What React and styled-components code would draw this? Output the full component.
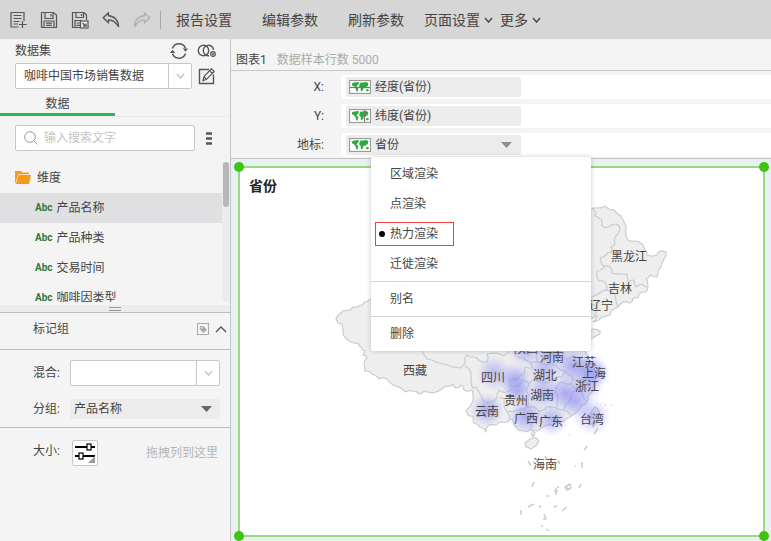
import React from "react";
import styled, { createGlobalStyle } from "styled-components";

const GlobalStyle = createGlobalStyle`
  * { box-sizing: border-box; }
  body { margin: 0; background: #f4f4f4; }
  body, button, input, select {
    font-family: Roboto, "Noto Sans CJK SC", sans-serif;
    font-size: 12px;
    line-height: 16px;
    color: #444;
  }
  button { border: 0; background: none; padding: 0; cursor: pointer; }
  svg { display: block; flex: none; }
`;

const Page = styled.div`
  min-height: 100vh;
  display: flex;
  flex-direction: column;
`;

/* ---------- toolbar ---------- */
const Toolbar = styled.header`
  height: 39px;
  display: flex;
  align-items: center;
  padding-left: 9px;
  background: #d6d6d6;
  white-space: nowrap;
`;
const IconGroup = styled.div`
  display: flex;
  gap: 13px;
  padding-right: 9px;
  border-right: 1px solid #a6a6a6;
`;
const IconButton = styled.button`
  display: flex;
  color: ${(p) => p.$color || "#555"};
`;
const TextGroup = styled.nav`
  display: flex;
  gap: 30px;
  margin-left: 15px;
`;
const MenuGroup = styled(TextGroup)`
  gap: 7px;
  margin-left: 20px;
`;
const TextButton = styled.button`
  display: flex;
  align-items: center;
  gap: 4px;
  font-size: 14px;
  line-height: 20px;
`;

/* ---------- sidebar ---------- */
const Body = styled.div`
  flex: 1;
  display: flex;
`;
const Sidebar = styled.aside`
  flex: none;
  width: 231px;
  border-right: 1px solid #c4c4c4;
  background: #f4f4f4;
`;
const DatasetPanel = styled.section`
  display: grid;
  grid-template-columns: 177px 1fr;
  grid-template-rows: 24px 26px;
  align-items: center;
  column-gap: 6px;
  padding: 0 15px 6px;
`;
const DatasetHeader = styled.div`
  grid-column: 1 / 3;
  display: flex;
  align-items: center;
  justify-content: space-between;
`;
const DatasetTools = styled.div`
  display: flex;
  gap: 9px;
`;
const SelectBox = styled.div`
  display: grid;
  grid-template-columns: 1fr 23px;
  height: 26px;
  border: 1px solid #c8c8c8;
  border-radius: 2px;
  background: #fff;
  overflow: hidden;
`;
const SelectInput = styled.select`
  grid-area: 1 / 1 / 2 / 3;
  width: 100%;
  appearance: none;
  border: 0;
  background: transparent;
  padding: 0 28px 0 8px;
`;
const SelectArrow = styled.span`
  grid-area: 1 / 2;
  display: grid;
  place-items: center;
  border-left: 1px solid #c8c8c8;
  color: #c4c4c4;
  pointer-events: none;
`;
const TabList = styled.div`
  display: flex;
  border-bottom: 1px solid #ebebeb;
`;
const Tab = styled.button`
  width: 115px;
  height: 21px;
  border-bottom: 3px solid #2ab75a;
  line-height: 18px;
`;
const SearchRow = styled.div`
  display: flex;
  align-items: center;
  gap: 11px;
  padding: 8px 15px 11px;
`;
const SearchField = styled.label`
  width: 180px;
  height: 26px;
  display: flex;
  align-items: center;
  gap: 6px;
  padding: 0 8px;
  border: 1px solid #c8c8c8;
  border-radius: 2px;
  background: #fff;
  color: #999;
`;
const SearchInput = styled.input`
  flex: 1;
  min-width: 0;
  border: 0;
  padding: 0;
  background: transparent;
  outline: 0;
  &::placeholder { color: #c4c4c4; }
`;
const FieldArea = styled.div`
  display: flex;
  height: 143px;
  padding-bottom: 3px;
`;
const FieldList = styled.ul`
  flex: 1;
  margin: 0;
  padding: 0;
  list-style: none;
  overflow: hidden;
`;
const FolderRow = styled.li`
  height: 31px;
  display: flex;
  align-items: center;
  gap: 5px;
  padding-left: 14px;
`;
const FieldRow = styled.li`
  height: 30px;
  display: flex;
  align-items: center;
  gap: 4px;
  padding-left: 35px;
  background: ${(p) => (p.$active ? "#e0e0e2" : "transparent")};
`;
const TypeTag = styled.span`
  font: bold 10px/14px Roboto, sans-serif;
  color: #2c7a3f;
`;
const ScrollTrack = styled.div`
  width: 8px;
  border-radius: 4px;
  background: #ececec;
`;
const ScrollThumb = styled.div`
  width: 6px;
  height: 45px;
  margin: 0 1px;
  border-radius: 3px;
  background: #b7b7b7;
`;
const Splitter = styled.div`
  height: 8px;
  display: grid;
  justify-content: center;
  align-content: center;
  background: #ececec;
  border-bottom: 1px solid #bcbcbc;
`;
const Grip = styled.div`
  width: 12px;
  height: 4px;
  border: solid #999;
  border-width: 1px 0;
`;
const MarkHeader = styled.div`
  height: 37px;
  display: flex;
  align-items: center;
  gap: 6px;
  padding: 0 3px 4px 33px;
  border-bottom: 1px solid #bcbcbc;
`;
const MarkTitle = styled.span`
  flex: 1;
`;
const MarkForm = styled.div`
  display: grid;
  grid-template-columns: 37px 1fr;
  align-items: center;
  row-gap: 13px;
  padding: 10px 10px 8px 33px;
  border-bottom: 1px solid #bcbcbc;
`;
const FlatSelect = styled.div`
  height: 20px;
  display: grid;
  grid-template-columns: 1fr 28px;
  background: #ececec;
  select { padding-left: 4px; }
`;
const FlatArrow = styled.span`
  grid-area: 1 / 2;
  display: grid;
  place-items: center;
  color: #666;
  pointer-events: none;
`;
const SizeRow = styled.div`
  display: flex;
  align-items: center;
  padding: 12px 12px 0 33px;
`;
const SizeLabel = styled.label`
  width: 39px;
  padding-bottom: 4px;
`;
const SizeButton = styled.button`
  width: 26px;
  height: 26px;
  border: 1px solid #c8c8c8;
  border-radius: 2px;
  background: #fff;
  overflow: hidden;
`;
const DropHint = styled.span`
  margin-left: auto;
  color: #b4b4b4;
`;

/* ---------- main ---------- */
const Main = styled.main`
  flex: 1;
  min-width: 0;
  display: flex;
  flex-direction: column;
`;
const ChartHeader = styled.div`
  height: 32px;
  display: flex;
  align-items: center;
  gap: 10px;
  padding: 10px 5px 0;
  border-bottom: 1px solid #c8c8c8;
`;
const ChartName = styled.h1`
  margin: 0;
  font-size: 12px;
  font-weight: 400;
`;
const SampleNote = styled.span`
  color: #aaa;
`;
const Shelves = styled.section`
  display: grid;
  grid-template-columns: 93px 1fr;
  grid-auto-rows: 24px;
  gap: 5px 17px;
  padding: 4px 0 1px;
  border-bottom: 1px solid #c4c4c4;
`;
const ShelfLabel = styled.span`
  text-align: right;
  line-height: 24px;
`;
const Shelf = styled.div`
  position: relative;
  padding: 2px 5px;
  border-radius: 2px 0 0 2px;
  background: #fff;
`;
const Pill = styled.button`
  width: 175px;
  height: 20px;
  display: flex;
  align-items: center;
  gap: 4px;
  padding: 0 9px 0 3px;
  border-radius: 2px;
  background: #ececec;
  text-align: left;
`;
const PillText = styled.span`
  flex: 1;
`;
const PopupMenu = styled.div`
  position: absolute;
  z-index: 2;
  top: 24px;
  left: 30px;
  width: 220px;
  background: #fff;
  border-radius: 2px;
  box-shadow: 0 0 5px rgba(0, 0, 0, 0.22);
`;
const MenuSection = styled.div`
  padding: 2px 0;
  & + & { border-top: 1px solid #d4d4d4; }
`;
const MenuItem = styled.button`
  width: 100%;
  height: 30px;
  display: flex;
  align-items: center;
  padding: 0 4px;
`;
const MenuLabel = styled.span`
  height: 24px;
  display: flex;
  align-items: center;
  padding-right: 15px;
  border: 1px solid ${(p) => (p.$marked ? "#f04040" : "transparent")};
`;
const BulletSlot = styled.span`
  width: 12px;
  margin-right: 2px;
  display: grid;
  justify-items: center;
`;
const Bullet = styled.span`
  width: 6px;
  height: 6px;
  border-radius: 50%;
  background: #000;
`;
const Canvas = styled.section`
  flex: 1;
  display: flex;
  padding: 7px 6px 4px 7px;
  background: #e8f0f5;
`;
const Frame = styled.div`
  position: relative;
  flex: 1;
  display: grid;
  border: 2px solid #94dc7e;
  background: #fff;
`;
const Handle = styled.span`
  position: absolute;
  width: 10px;
  height: 10px;
  border-radius: 50%;
  background: #3cc410;
  ${(p) => p.$v}: -6px;
  ${(p) => p.$h}: -6px;
`;
const ChartTitle = styled.h2`
  grid-area: 1 / 1;
  margin: 0;
  padding: 8px 9px;
  font-size: 14px;
  line-height: 20px;
  font-weight: 700;
  color: #222;
`;
const MapDrawing = styled.svg`
  grid-area: 1 / 1;
  width: 100%;
  height: 100%;
`;
const MapLabel = styled.text`
  font-size: 12px;
  fill: #444;
  text-anchor: middle;
`;

/* ---------- icons ---------- */
const Icon = ({ w = 18, h = 18, children, ...rest }) => (
  <svg width={w} height={h} viewBox={`0 0 ${w} ${h}`} fill="none" stroke="currentColor" strokeWidth="1.2" aria-hidden="true" {...rest}>
    {children}
  </svg>
);
const NewReportIcon = () => (
  <Icon>
    <path d="M9.5 16H2V1.5H15V10M4.5 4.5H12.5M4.5 7.5H12.5M4.5 10.5H10.5M4.5 13H9M13.5 10V17M10 13.5H17.5" />
  </Icon>
);
const SaveIcon = () => (
  <Icon>
    <path d="M1.5 1.5H13.5L16.5 4V16.5H1.5ZM5 1.5V7.5H13V1.5M11 3V5.5M4 16.5V10H14V16.5M6 12.2H12M6 14.4H12" />
  </Icon>
);
const SaveAsIcon = () => (
  <Icon>
    <path d="M9 16.5H1.5V1.5H13L15.5 4V9M5 1.5V6.5H12.5V1.5M10.5 3V5M4 16.5V9.5H10V11M5.5 12H9M5.5 14.3H9" />
    <rect x="9.5" y="10" width="7.5" height="7" fill="#eee" />
    <path d="M11.5 12L14.5 15M15 12.5V15.2H12" />
  </Icon>
);
const undoPath = "M6.5 1.8L1.2 6.8L6.5 11.8V9C10 8.6 13.5 10.8 16.5 15.5C16.5 9.5 12.5 5.2 6.5 4.8Z";
const UndoIcon = () => (
  <Icon><path d={undoPath} strokeLinejoin="round" strokeWidth="1.4" /></Icon>
);
const RedoIcon = () => (
  <Icon><path d={undoPath} transform="matrix(-1 0 0 1 18 0)" strokeLinejoin="round" strokeWidth="1.4" /></Icon>
);
const Chevron = ({ w = 9, h = 6, up }) => (
  <Icon w={w} h={h}>
    <path d={up ? `M1 ${h - 1}L${w / 2} 1L${w - 1} ${h - 1}` : `M1 1L${w / 2} ${h - 1}L${w - 1} 1`} strokeWidth="1.4" />
  </Icon>
);
const Caret = () => (
  <Icon w={11} h={6}><path d="M0 0H11L5.5 6Z" fill="currentColor" stroke="none" /></Icon>
);
const RefreshIcon = () => (
  <Icon>
    <path d="M2.4 6.5A7 7 0 0 1 15.5 6.2M15.6 11.5A7 7 0 0 1 2.5 11.8" strokeWidth="1.5" />
    <path d="M0 11L2.6 7.8L5.2 11ZM12.8 6.6L18 6.6L15.6 9.8Z" fill="currentColor" stroke="none" />
  </Icon>
);
const JoinIcon = () => (
  <Icon w={19}>
    <circle cx="6.5" cy="8.5" r="5.2" strokeWidth="1.4" />
    <path d="M16.6 7.8A5.2 5.2 0 1 0 12 13.7" strokeWidth="1.4" />
    <circle cx="16" cy="12" r="2.3" />
    <path d="M16 10.8V13.2M14.8 12H17.2" strokeWidth="1" />
  </Icon>
);
const EditIcon = () => (
  <Icon>
    <path d="M11 2.5H1.5V16.5H15.5V7.5" strokeWidth="1.4" />
    <path d="M13.4 1.8L16.2 4.4L8.5 12.3L5 13.8L6 9.6ZM11.5 3.8L14.3 6.4M6 9.6L8.5 12.3" />
  </Icon>
);
const SearchIcon = () => (
  <Icon w={14} h={14}><circle cx="6" cy="6" r="5.3" strokeWidth="1" /><path d="M10 10L13.5 13.5" strokeWidth="1" /></Icon>
);
const MoreIcon = () => (
  <Icon w={6} h={13}><path d="M0 1.5H6M0 6.5H6M0 11.5H6" strokeWidth="2.6" /></Icon>
);
const FolderIcon = () => (
  <Icon w={18} h={15} stroke="none">
    <path d="M1 14V1H7L8.5 2.5H15V4.2H4.2L1.8 12Z" fill="#f79a1c" />
    <path d="M4.6 5H17L15 14H1.8Z" fill="#f79a1c" />
  </Icon>
);
const TagIcon = () => (
  <Icon w={12} h={12} color="#aaa">
    <rect x=".5" y=".5" width="11" height="11" strokeWidth="1" />
    <path d="M2.8 3V6.3L6.5 10L10 6.7L6.2 3Z" fill="currentColor" stroke="none" />
    <circle cx="4.5" cy="4.7" r=".8" fill="#fff" stroke="none" />
  </Icon>
);
const SizeIcon = () => (
  <Icon w={24} h={24} stroke="#000">
    <path d="M2 6H22M2 15H22" strokeWidth="2" />
    <rect x="14" y="3" width="4" height="6" fill="#fff" />
    <rect x="6" y="12" width="4" height="6" fill="#fff" />
    <path d="M22 15V22H15Z" fill="#999" stroke="none" />
  </Icon>
);
const WorldIcon = ({ line }) => (
  <Icon w={22} h={14} stroke="none">
    <rect x=".5" y=".5" width="21" height="13" fill="#fff" stroke="#999" />
    <path d="M2.8 3.4L5 2.4L9.8 2L9.6 4L8.2 5.6L7.4 6.4L9.4 8L8.6 11.6L7.4 11.4L6.6 8.6L5 6.2L3 5.2ZM10.4 4.4L11.6 2.4L14 2.6L17.6 2L19.4 3.6L18.6 6.6L17 6.8L16 8.4L14.8 7L14.2 9.2L13 11.4L11.8 10.6L11.6 7.8L10.2 6.6ZM17 9.4L19.4 8.8L19.6 11L17.4 11.4Z" fill="#2fa83c" />
    {line === "h" && <path d="M1 7.5H21" stroke="#777" />}
    {line === "v" && <path d="M15.5 1V13" stroke="#777" />}
  </Icon>
);

/* ---------- map ---------- */
// Breaks each segment into short jittered steps.
const rough = (pts, amp = 1.1) => {
  const out = [pts[0]];
  for (let i = 1; i < pts.length; i++) {
    const [ax, ay] = pts[i - 1];
    const [bx, by] = pts[i];
    const len = Math.hypot(bx - ax, by - ay);
    const n = Math.max(1, Math.round(len / 3));
    for (let k = 1; k <= n; k++) {
      const j = k === n ? 0 : Math.sin((ax + by) * 7.3 + k * 12.9) * amp;
      out.push([ax + ((bx - ax) * k) / n - ((by - ay) / len) * j, ay + ((by - ay) * k) / n + ((bx - ax) / len) * j]);
    }
  }
  return "M" + out.map(([x, y]) => `${x.toFixed(1)} ${y.toFixed(1)}`).join("L");
};
const mainland = [[371,299],[365,302],[359,306],[353,307],[350,310],[343,311],[338,315],[336,319],[338,323],[342,324],[343,331],[346,338],[351,342],[358,343],[361,347],[365,351],[363,355],[367,358],[364,364],[365,371],[372,374],[379,379],[387,379],[396,386],[405,392],[413,391],[419,394],[424,391],[436,392],[445,386],[453,384],[456,388],[461,385],[464,390],[472,390],[472,403],[466,411],[468,415],[473,416],[474,423],[480,427],[486,432],[488,426],[496,425],[501,422],[507,422],[513,419],[516,427],[523,431],[530,430],[537,431],[543,427],[553,425],[562,422],[570,417],[577,412],[582,405],[587,402],[588,396],[593,391],[595,382],[593,377],[600,373],[594,368],[589,360],[584,351],[586,342],[592,338],[596,336],[600,334],[600,331],[593,329],[585,332],[579,325],[588,319],[597,315],[593,322],[602,317],[610,315],[614,309],[618,307],[623,302],[630,303],[633,299],[638,298],[639,294],[646,292],[648,287],[646,279],[650,275],[657,277],[661,267],[664,259],[666,252],[660,251],[657,255],[647,255],[643,245],[635,241],[628,240],[626,229],[621,216],[614,210],[605,206],[598,208],[590,208],[560,240],[500,290],[430,285]];
const borders = [
  [[593,209],[596,213],[595,216],[602,220],[602,226],[609,227],[616,224],[620,228],[616,236],[615,244],[611,247],[611,252],[606,255],[600,258],[604,267],[609,266],[612,273],[622,274],[627,274],[628,281],[634,280],[636,287],[642,284],[647,287]],
  [[604,267],[597,271],[599,281],[605,282],[607,290],[591,297]],
  [[606,290],[614,293],[616,300],[618,307]],
  [[580,306],[591,303],[597,308],[594,315]],
  [[422,351],[427,359],[440,363],[450,366],[460,368],[465,362],[467,355],[473,357],[479,360],[487,362],[487,354],[494,353],[503,356],[510,350]],
  [[465,366],[471,373],[473,388],[476,387],[481,395],[486,403],[493,402],[497,397],[499,390],[507,392],[512,389]],
  [[514,354],[523,358],[531,363],[532,368],[525,367],[524,374],[518,379],[509,380],[510,386],[518,386],[522,380],[529,383],[526,389],[529,395],[529,404],[524,409],[515,411],[507,411],[504,405],[504,398],[499,397]],
  [[507,411],[510,416],[509,420]],
  [[531,363],[539,362],[550,364],[558,368],[565,371],[562,377],[553,379],[546,383],[534,380],[529,383]],
  [[524,409],[534,407],[539,411],[537,418],[531,424],[530,430]],
  [[539,411],[547,407],[556,408],[558,398],[555,390],[562,382],[571,384],[577,388],[571,395],[568,403],[564,410],[571,416]],
  [[565,371],[572,376],[578,381],[584,379],[590,377]],
  [[577,388],[582,393],[587,401]],
  [[556,408],[564,410]],
  [[560,351],[565,359],[572,356],[577,365],[584,370],[584,379]],
  [[540,351],[536,357],[539,362]],
  [[571,384],[572,376]],
];
const islands = [
  [[525,443],[530,439],[536,438],[539,441],[536,446],[531,449],[526,447],[525,443]],
  [[595,407],[599,411],[597,419],[593,427],[589,421],[591,412],[595,407]],
  [[532,430],[535,433],[533,437],[531,433]],
];
const islets = "M598 428L594 434M587 446L584 450M582 462V468M581 484L579 488M567 507L562 511M521 510V515M534 482L532 487M528 461L531 466M575 466H576M569 435H570M605 405H606M611 405H612M546 496H549M528 507L534 504M540 505V508M554 507L557 506M556 488V495M554 491H558M557 487H559M565 487L570 484L571 488L567 490ZM544 514L546 519H543M541 526H543M546 529L549 531M556 463L559 461V464M545 456L547 459M566 487L569 490";
const heat = [[494,373,18,.75],[515,380,18,1],[518,392,15,.8],[487,410,17,1],[544,370,18,.75],[543,392,18,.85],[565,393,19,1],[577,402,17,.85],[526,416,18,1],[552,420,17,.85],[592,416,19,.75],[573,366,19,1],[590,371,18,1],[597,374,14,.6],[587,386,17,.7],[526,351,17,.75],[552,353,17,.85]];
const labels = [["黑龙江",629,256],["吉林",620,288],["辽宁",601,305],["西藏",415,370],["四川",493,377],["陕西",526,348],["河南",552,357],["江苏",584,362],["上海",594,373],["湖北",545,375],["浙江",587,386],["湖南",542,395],["贵州",516,400],["云南",487,411],["广西",526,418],["广东",551,421],["台湾",592,419],["海南",545,464]];

const ChinaMap = () => (
  <MapDrawing viewBox="240 168 523 367" role="img" aria-label="省份">
    <defs>
      <radialGradient id="heat">
        <stop offset="0" stopColor="#7d7df0" stopOpacity=".62" />
        <stop offset=".45" stopColor="#8e8ef5" stopOpacity=".42" />
        <stop offset="1" stopColor="#a8a8ff" stopOpacity="0" />
      </radialGradient>
    </defs>
    <g stroke="#c7cecd" strokeWidth="1.2" strokeLinejoin="round" fill="none">
      <path d={rough(mainland) + "Z"} fill="#eee" />
      {islands.map((p, i) => <path key={i} d={rough(p, 0.5) + (i < 2 ? "Z" : "")} fill="#eee" />)}
      {borders.map((p, i) => <path key={i} d={rough(p)} />)}
      <path d={islets} strokeWidth="1.5" />
    </g>
    {heat.map(([x, y, r, o]) => <circle key={`${x}-${y}`} cx={x} cy={y} r={r} fill="url(#heat)" opacity={o} />)}
    {labels.map(([t, x, y]) => <MapLabel key={t} x={x} y={y + 5}>{t}</MapLabel>)}
  </MapDrawing>
);

/* ---------- page ---------- */
const tools = [["新建", NewReportIcon], ["保存", SaveIcon], ["另存为", SaveAsIcon], ["撤销", UndoIcon], ["重做", RedoIcon, "#b0b0b0"]];
const menu = [["区域渲染", "点渲染", "热力渲染", "迁徙渲染"], ["别名"], ["删除"]];
const fields = ["产品名称", "产品种类", "交易时间", "咖啡因类型"];

export default function App() {
  return (
    <Page>
      <GlobalStyle />
      <Toolbar>
        <IconGroup>
          {tools.map(([name, Glyph, color]) => (
            <IconButton key={name} aria-label={name} $color={color}><Glyph /></IconButton>
          ))}
        </IconGroup>
        <TextGroup>
          {["报告设置", "编辑参数", "刷新参数"].map((t) => <TextButton key={t}>{t}</TextButton>)}
        </TextGroup>
        <MenuGroup>
          {["页面设置", "更多"].map((t) => <TextButton key={t} aria-haspopup="menu">{t}<Chevron /></TextButton>)}
        </MenuGroup>
      </Toolbar>
      <Body>
        <Sidebar>
          <DatasetPanel>
            <DatasetHeader>
              <label htmlFor="dataset">数据集</label>
              <DatasetTools>
                <IconButton aria-label="刷新"><RefreshIcon /></IconButton>
                <IconButton aria-label="关联"><JoinIcon /></IconButton>
              </DatasetTools>
            </DatasetHeader>
            <SelectBox>
              <SelectInput id="dataset"><option>咖啡中国市场销售数据</option></SelectInput>
              <SelectArrow><Chevron /></SelectArrow>
            </SelectBox>
            <IconButton aria-label="编辑"><EditIcon /></IconButton>
          </DatasetPanel>
          <TabList role="tablist"><Tab role="tab" aria-selected="true">数据</Tab></TabList>
          <SearchRow>
            <SearchField>
              <SearchIcon />
              <SearchInput placeholder="输入搜索文字" aria-label="输入搜索文字" />
            </SearchField>
            <IconButton aria-label="更多"><MoreIcon /></IconButton>
          </SearchRow>
          <FieldArea>
            <FieldList>
              <FolderRow><FolderIcon />维度</FolderRow>
              {fields.map((f, i) => (
                <FieldRow key={f} $active={i === 0}><TypeTag>Abc</TypeTag>{f}</FieldRow>
              ))}
            </FieldList>
            <ScrollTrack><ScrollThumb /></ScrollTrack>
          </FieldArea>
          <Splitter><Grip /></Splitter>
          <MarkHeader>
            <MarkTitle>标记组</MarkTitle>
            <IconButton aria-label="标签"><TagIcon /></IconButton>
            <IconButton aria-label="收起"><Chevron w={12} h={7} up /></IconButton>
          </MarkHeader>
          <MarkForm>
            <label htmlFor="blend">混合:</label>
            <SelectBox>
              <SelectInput id="blend"><option></option></SelectInput>
              <SelectArrow><Chevron /></SelectArrow>
            </SelectBox>
            <label htmlFor="group">分组:</label>
            <FlatSelect>
              <SelectInput id="group"><option>产品名称</option></SelectInput>
              <FlatArrow><Caret /></FlatArrow>
            </FlatSelect>
          </MarkForm>
          <SizeRow>
            <SizeLabel htmlFor="size">大小:</SizeLabel>
            <SizeButton id="size"><SizeIcon /></SizeButton>
            <DropHint>拖拽列到这里</DropHint>
          </SizeRow>
        </Sidebar>
        <Main>
          <ChartHeader>
            <ChartName>图表1</ChartName>
            <SampleNote>数据样本行数 5000</SampleNote>
          </ChartHeader>
          <Shelves>
            <ShelfLabel>X:</ShelfLabel>
            <Shelf><Pill><WorldIcon line="h" /><PillText>经度(省份)</PillText></Pill></Shelf>
            <ShelfLabel>Y:</ShelfLabel>
            <Shelf><Pill><WorldIcon line="v" /><PillText>纬度(省份)</PillText></Pill></Shelf>
            <ShelfLabel>地标:</ShelfLabel>
            <Shelf>
              <Pill aria-haspopup="menu" aria-expanded="true">
                <WorldIcon />
                <PillText>省份</PillText>
                <IconTone><Caret /></IconTone>
              </Pill>
              <PopupMenu role="menu">
                {menu.map((items) => (
                  <MenuSection key={items[0]}>
                    {items.map((t) => (
                      <MenuItem key={t} role="menuitem">
                        <MenuLabel $marked={t === "热力渲染"}>
                          <BulletSlot>{t === "热力渲染" && <Bullet />}</BulletSlot>
                          {t}
                        </MenuLabel>
                      </MenuItem>
                    ))}
                  </MenuSection>
                ))}
              </PopupMenu>
            </Shelf>
          </Shelves>
          <Canvas>
            <Frame>
              <ChinaMap />
              <ChartTitle>省份</ChartTitle>
              {["top", "bottom"].map((v) => ["left", "right"].map((h) => <Handle key={v + h} $v={v} $h={h} />))}
            </Frame>
          </Canvas>
        </Main>
      </Body>
    </Page>
  );
}

const IconTone = styled.span`
  color: #8e8e8e;
`;
